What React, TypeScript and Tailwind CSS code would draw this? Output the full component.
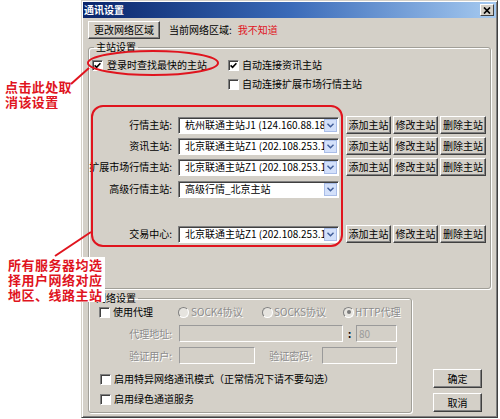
import React from "react";

const face = "font-['Noto_Sans_CJK_SC','Noto_Sans',sans-serif]";

function Btn({ children, className = "" }: { children: React.ReactNode; className?: string }) {
  return (
    <button
      type="button"
      className={`flex items-center justify-center shrink-0 bg-[#d4d0c8] border border-t-white border-l-white border-r-[#404040] border-b-[#404040] shadow-[inset_-1px_-1px_0_#808080] text-black ${className}`}
    >
      {children}
    </button>
  );
}

function Check({ checked = false }: { checked?: boolean }) {
  return (
    <span className="w-[11px] h-[11px] shrink-0 flex items-center justify-center bg-white border border-t-[#808080] border-l-[#808080] border-r-white border-b-white shadow-[inset_1px_1px_0_#404040]">
      {checked && (
        <svg width="7" height="7" viewBox="0 0 7 7">
          <path d="M0.6 3.4 L2.6 5.4 L6.4 1.2" stroke="#000" strokeWidth="1.6" fill="none" />
        </svg>
      )}
    </span>
  );
}

function Radio({ on = false }: { on?: boolean }) {
  return (
    <span className="w-[11px] h-[11px] shrink-0 rounded-full flex items-center justify-center bg-[#e6e4df] border border-t-[#808080] border-l-[#808080] border-r-white border-b-white">
      {on && <span className="w-[4px] h-[4px] rounded-full bg-[#7a7a7a]" />}
    </span>
  );
}

function Combo({ text }: { text: string }) {
  return (
    <div className="ml-[3px] w-[161px] h-[17px] shrink-0 flex items-center bg-white border border-t-[#808080] border-l-[#808080] border-r-white border-b-white shadow-[inset_1px_1px_0_#404040]">
      <span className="flex-1 overflow-hidden whitespace-nowrap pl-[6px] text-black">{text}</span>
      <span className="w-[13px] h-[13px] mr-[1px] shrink-0 flex items-center justify-center bg-[#d3e0fa] border border-[#a9bde8]">
        <svg width="7" height="5" viewBox="0 0 7 5">
          <path d="M0.5 0.8 L3.5 3.8 L6.5 0.8" stroke="#3d5a96" strokeWidth="1.4" fill="none" />
        </svg>
      </span>
    </div>
  );
}

function ServerRow({ label, text, buttons = true }: { label: string; text: string; buttons?: boolean }) {
  return (
    <div className="flex items-center h-[18px]">
      <span className="w-[84px] text-right pr-[1px] text-black">{label}</span>
      <span className="w-[2px]" />
      <Combo text={text} />
      {buttons && (
        <>
          <Btn className="ml-[7px] w-[45px] h-[18px]">添加主站</Btn>
          <Btn className="ml-[2px] w-[45px] h-[18px]">修改主站</Btn>
          <Btn className="ml-[2px] w-[46px] h-[18px]">删除主站</Btn>
        </>
      )}
    </div>
  );
}

const gray = "text-[#8c8c8c] [text-shadow:1px_1px_0_#fff]";
const dimField =
  "h-[17px] shrink-0 bg-[#d4d0c8] border border-t-[#9a9a9a] border-l-[#9a9a9a] border-r-white border-b-white";

export default function App() {
  return (
    <div className={`relative w-[500px] h-[419px] bg-white overflow-hidden flex text-[10px] leading-[14px] ${face}`}>
      <div className="w-[81px] shrink-0" />

      {/* dialog */}
      <div className="w-[417px] h-[418px] shrink-0 flex flex-col bg-[#d4d0c8] border border-t-[#d4d0c8] border-l-[#d4d0c8] border-r-[#404040] border-b-[#404040] shadow-[inset_1px_1px_0_#fff,inset_-1px_-1px_0_#808080] p-[1px]">
        <div className="h-[16px] flex items-center justify-between bg-linear-to-r from-[#0a246a] via-[#3a6ab8] to-[#a6caf0] pl-[1px]">
          <span className="text-white font-bold text-[10px] leading-[14px]">通讯设置</span>
          <span className="w-[14px] h-[12px] mr-[2px] flex items-center justify-center bg-[#d4d0c8] border border-t-white border-l-white border-r-[#404040] border-b-[#404040]">
            <svg width="8" height="7" viewBox="0 0 8 7">
              <path d="M1 0.5 L7 6.5 M7 0.5 L1 6.5" stroke="#000" strokeWidth="1.7" />
            </svg>
          </span>
        </div>

        <div className="flex-1 flex flex-col pl-[5px]">
          <div className="mt-[3px] flex items-center h-[18px]">
            <Btn className="w-[72px] h-[18px]">更改网络区域</Btn>
            <span className="ml-[9px] text-black">当前网络区域:</span>
            <span className="ml-[6px] text-[#e0141e]">我不知道</span>
          </div>

          {/* 主站设置 */}
          <fieldset className="mt-[1px] w-[403px] h-[249px] border border-[#a19f98] rounded-[3px] shadow-[inset_1px_1px_0_#fff,1px_1px_0_#fff]">
            <legend className="ml-[5px] px-[2px] text-black">主站设置</legend>
            <div className="grid grid-cols-[136px_1fr] pt-[4px] pl-[3px]">
              <label className="flex items-center gap-[4px] h-[14px] text-black">
                <Check checked />
                登录时查找最快的主站
              </label>
              <label className="flex items-center gap-[3px] h-[14px] text-black">
                <Check checked />
                自动连接资讯主站
              </label>
              <span />
              <label className="mt-[5px] flex items-center gap-[3px] h-[14px] text-black">
                <Check />
                自动连接扩展市场行情主站
              </label>
            </div>

            <div className="mt-[25px] flex flex-col gap-[3px]">
              <ServerRow label="行情主站:" text="杭州联通主站J1 (124.160.88.18" />
              <ServerRow label="资讯主站:" text="北京联通主站Z1 (202.108.253.1" />
              <ServerRow label="扩展市场行情主站:" text="北京联通主站Z1 (202.108.253.1" />
              <div className="mt-[1px]">
                <ServerRow label="高级行情主站:" text="高级行情_北京主站" buttons={false} />
              </div>
              <div className="mt-[24px]">
                <ServerRow label="交易中心:" text="北京联通主站Z1 (202.108.253.1" />
              </div>
            </div>
          </fieldset>

          {/* 网络设置 + 确定/取消 */}
          <div className="mt-[2px] flex">
            <fieldset className="w-[324px] h-[122px] shrink-0 border border-[#a19f98] rounded-[3px] shadow-[inset_1px_1px_0_#fff,1px_1px_0_#fff]">
              <legend className="ml-[5px] px-[2px] text-black">网络设置</legend>

              <div className="flex items-center h-[14px] pl-[10px]">
                <label className="w-[79px] flex items-center gap-[3px] text-black">
                  <Check />
                  使用代理
                </label>
                <span className={`w-[84px] flex items-center gap-[2px] ${gray}`}>
                  <Radio />
                  SOCK4协议
                </span>
                <span className={`w-[81px] flex items-center ${gray}`}>
                  <Radio />
                  <span className="ml-[1px]">SOCKS协议</span>
                </span>
                <span className={`flex items-center gap-[1px] ${gray}`}>
                  <Radio on />
                  HTTP代理
                </span>
              </div>

              <div className="mt-[6px] flex items-center h-[17px]">
                <span className={`w-[83px] text-right ${gray}`}>代理地址:</span>
                <span className={`ml-[7px] w-[164px] ${dimField}`} />
                <span className="w-[13px] text-center text-black font-bold">:</span>
                <span className={`w-[41px] ${dimField} flex items-center pl-[2px] text-[#9a9a9a]`}>80</span>
              </div>

              <div className="mt-[5px] flex items-center h-[17px]">
                <span className={`w-[83px] text-right ${gray}`}>验证用户:</span>
                <span className={`ml-[7px] w-[76px] ${dimField}`} />
                <span className={`w-[57px] text-right ${gray}`}>验证密码:</span>
                <span className={`ml-[10px] w-[75px] ${dimField}`} />
              </div>

              <label className="mt-[8px] flex items-center gap-[3px] h-[14px] pl-[11px] text-black">
                <Check />
                启用特异网络通讯模式（正常情况下请不要勾选）
              </label>
              <label className="mt-[6px] flex items-center gap-[3px] h-[14px] pl-[11px] text-black">
                <Check />
                启用绿色通道服务
              </label>
            </fieldset>

            <div className="ml-[21px] self-end mb-[1px] flex flex-col gap-[5px]">
              <Btn className="w-[49px] h-[19px]">确定</Btn>
              <Btn className="w-[49px] h-[19px]">取消</Btn>
            </div>
          </div>
        </div>
      </div>

      {/* red annotations drawn over the dialog */}
      <svg className="absolute inset-0 pointer-events-none" width="500" height="419" viewBox="0 0 500 419">
        <ellipse cx="153" cy="63" rx="65" ry="12" fill="none" stroke="#e0141e" strokeWidth="2" />
        <rect x="92" y="106" width="250" height="140" rx="11" fill="none" stroke="#e0141e" strokeWidth="2" />
        <line x1="71" y1="84" x2="89" y2="68" stroke="#e0141e" strokeWidth="2" />
        <line x1="55" y1="256" x2="91" y2="232" stroke="#e0141e" strokeWidth="2" />
      </svg>

      <div className="absolute left-[5px] top-[79px] text-[13px] leading-[15px] font-bold tracking-[0.4px] text-[#e0141e]">
        <div>点击此处取</div>
        <div>消该设置</div>
      </div>

      <div className="absolute left-[8px] top-[257px] bg-white pr-[2px] text-[13px] leading-[15px] font-bold tracking-[0.5px] text-[#e0141e]">
        <div>所有服务器均选</div>
        <div>择用户网络对应</div>
        <div>地区、线路主站</div>
      </div>
    </div>
  );
}
